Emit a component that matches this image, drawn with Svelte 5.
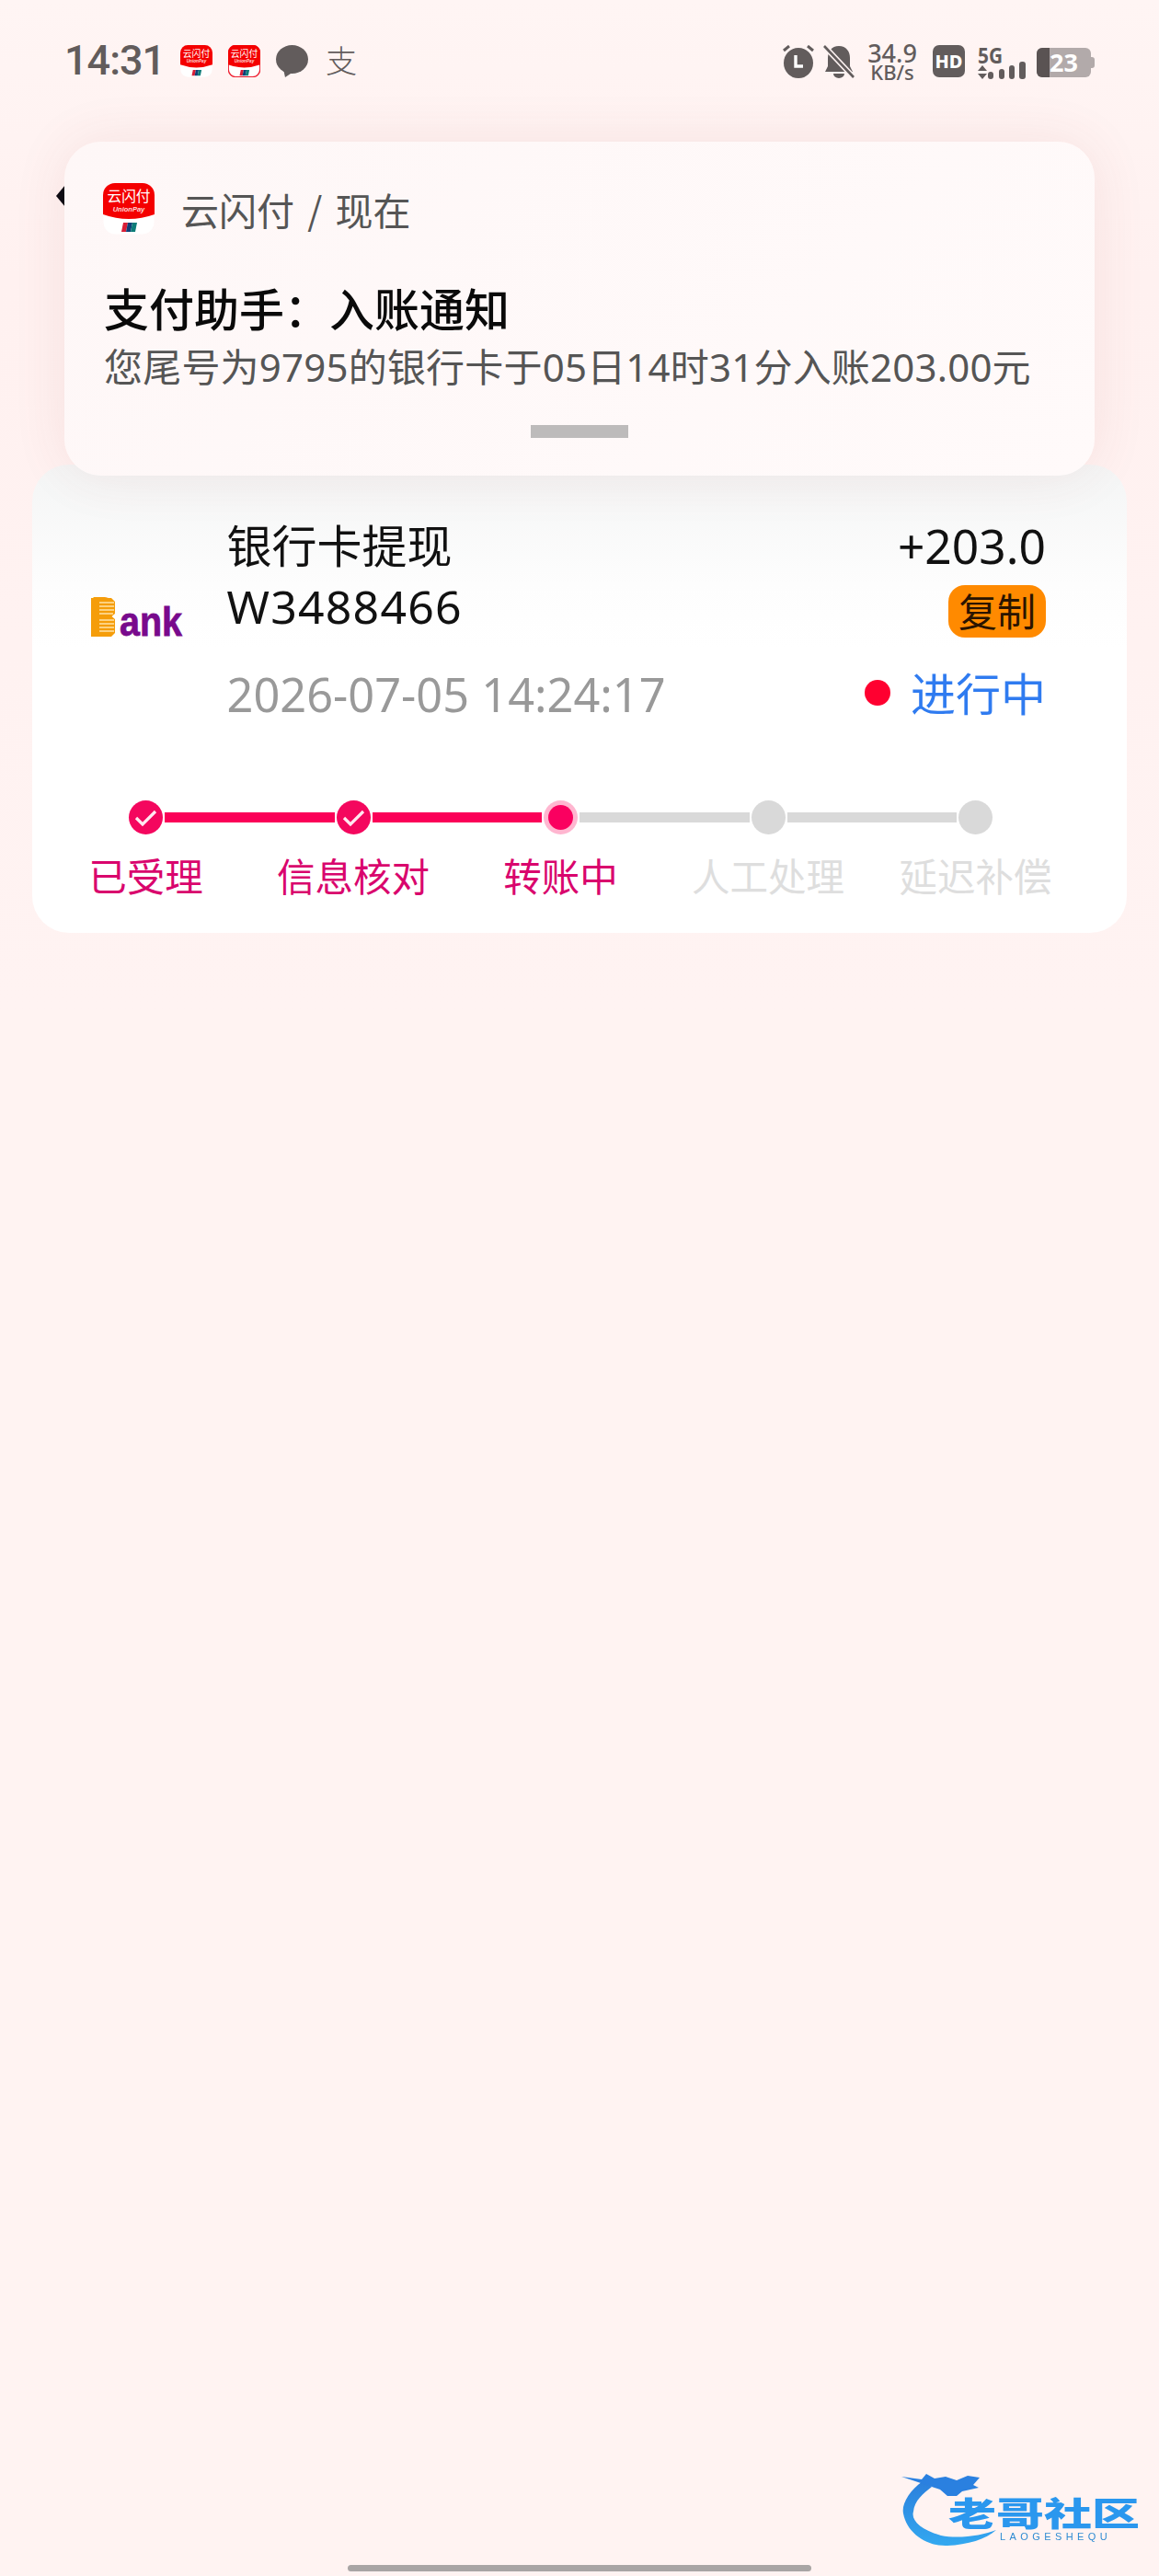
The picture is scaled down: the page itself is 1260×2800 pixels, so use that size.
<script>
  const steps = [
    { label: '已受理', state: 'done' },
    { label: '信息核对', state: 'done' },
    { label: '转账中', state: 'current' },
    { label: '人工处理', state: 'todo' },
    { label: '延迟补偿', state: 'todo' }
  ];
</script>

{#snippet appIcon(size, outlined)}
  <svg class="app-icon" width={size} height={size} viewBox="0 0 56 56" aria-hidden="true">
    <rect x="0.5" y="0.5" width="55" height="55" rx="13" fill="#fff" stroke={outlined ? '#ee2233' : 'none'} stroke-width={outlined ? 2 : 0} />
    <path d="M0 13A13 13 0 0 1 13 0H43A13 13 0 0 1 56 13V34Q28 44 0 34Z" fill="#f40000" />
    <text x="28" y="20" class="yun" text-anchor="middle" textLength="47" lengthAdjust="spacingAndGlyphs">云闪付</text>
    <text x="28" y="31" class="up" text-anchor="middle">UnionPay</text>
    <path d="M22 43H27L25 53H20Z" fill="#d81e36" />
    <path d="M27 43H32L30 53H25Z" fill="#0f3f76" />
    <path d="M32 43H37L35 53H30Z" fill="#0d7c78" />
  </svg>
{/snippet}

<div class="page">
  <header class="status">
    <div class="status-left">
      <span class="time">14:31</span>
      {@render appIcon(35, false)}
      {@render appIcon(35, true)}
      <svg class="chat" width="35" height="35" viewBox="0 0 35 35" aria-hidden="true">
        <ellipse cx="17.5" cy="15.5" rx="17.5" ry="15.5" fill="#625c5c" />
        <path d="M8 26L10 35L19 29Z" fill="#625c5c" />
      </svg>
      <span class="ali">支</span>
    </div>
    <div class="status-right">
      <svg width="36" height="36" viewBox="0 0 36 36" aria-hidden="true">
        <ellipse cx="18" cy="19.5" rx="16" ry="16.5" fill="#625c5c" />
        <path d="M2 6L8 1M34 6L28 1" stroke="#625c5c" stroke-width="3" />
        <path d="M15 11V23H23" fill="none" stroke="#fff" stroke-width="3.4" />
      </svg>
      <svg width="34" height="36" viewBox="0 0 34 36" aria-hidden="true">
        <path d="M17 1C25 1 29 7 29 14V23L32 29H2L5 23V14C5 7 9 1 17 1Z" fill="#625c5c" />
        <path d="M11 31A6 5 0 0 0 23 31Z" fill="#625c5c" />
        <path d="M1 1L33 35" stroke="#fdf2f1" stroke-width="6" />
        <path d="M1 1L33 35" stroke="#625c5c" stroke-width="2.6" />
      </svg>
      <div class="speed"><span class="s1">34.9</span><span class="s2">KB/s</span></div>
      <span class="hd">HD</span>
      <svg width="52" height="38" viewBox="0 0 52 38" aria-hidden="true">
        <text x="0" y="20" class="fiveg" textLength="27" lengthAdjust="spacingAndGlyphs">5G</text>
        <path d="M5 22L10 28H0ZM0 31H10L5 37Z" fill="#625c5c" />
        <rect x="11" y="29" width="6" height="8" rx="3" fill="#625c5c" />
        <rect x="23" y="26" width="6" height="11" rx="3" fill="#625c5c" />
        <rect x="34" y="22" width="6" height="15" rx="3" fill="#625c5c" />
        <rect x="45" y="18" width="7" height="19" rx="3" fill="#625c5c" />
      </svg>
      <div class="battery"><span class="charge"></span><span class="level">23</span><span class="nub"></span></div>
    </div>
  </header>

  <div class="top-bar">
    <svg class="back" width="12" height="26" viewBox="0 0 12 26" aria-hidden="true"><path d="M11 1L1 13L11 25Z" fill="#0a0a12" /></svg>
  </div>

  <section class="card">
    <div class="summary">
      <div class="logo">
        <svg width="104" height="44" viewBox="0 0 104 44" aria-hidden="true">
          <path d="M3 1H25L29 5V18L25.5 21L29 24V39L25 43H3Z" fill="#f59d0a" />
          <text x="4" y="42" class="logo-b" textLength="25" lengthAdjust="spacingAndGlyphs">B</text>
          <path d="M12 6H28M12 10H28M12 14H28M12 18H27M12 25H28M12 29H28M12 33H28M12 37H28" stroke="#ffe2a6" stroke-width="1.3" />
          <text x="34" y="42" class="logo-ank" textLength="68" lengthAdjust="spacingAndGlyphs">ank</text>
        </svg>
      </div>
      <div class="info">
        <div class="line-top">
          <span class="name">银行卡提现</span>
          <span class="amount">+203.0</span>
        </div>
        <div class="line-mid">
          <span class="order">W3488466</span>
          <span class="copy">复制</span>
        </div>
        <div class="line-bot">
          <span class="date">2026-07-05 14:24:17</span>
          <span class="state"><i class="dot-red"></i><span class="state-text">进行中</span></span>
        </div>
      </div>
    </div>

    <div class="track">
      {#each steps as s, i}
        <span class="node {s.state}">
          {#if s.state === 'done'}
            <svg width="25" height="20" viewBox="0 0 25 20" aria-hidden="true"><path d="M2 10L9 17L23 3" fill="none" stroke="#ffe9f0" stroke-width="3.2" /></svg>
          {:else if s.state === 'current'}
            <i class="inner"></i>
          {/if}
        </span>
        {#if i < steps.length - 1}
          <span class="bar" class:on={i < 2}></span>
        {/if}
      {/each}
    </div>
    <div class="labels">
      {#each steps as s}
        <span class="label" class:off={s.state === 'todo'}>{s.label}</span>
      {/each}
    </div>
  </section>

  <div class="home"></div>

  <aside class="notice">
    <div class="notice-app">
      {@render appIcon(56, false)}
      <span class="app-name">云闪付 / 现在</span>
    </div>
    <div class="notice-title">支付助手：入账通知</div>
    <div class="notice-body">您尾号为9795的银行卡于05日14时31分入账203.00元</div>
    <div class="grip"></div>
  </aside>

  <div class="mark">
    <svg class="dragon" width="110" height="90" viewBox="0 0 110 90" aria-hidden="true">
      <defs>
        <linearGradient id="dg" x1="0" y1="0" x2="0" y2="1">
          <stop offset="0" stop-color="#2b7fdc" />
          <stop offset="1" stop-color="#33a8f0" />
        </linearGradient>
      </defs>
      <path d="M23 11C8 22 0 36 2 46C6 68 28 82 50 81C72 80 92 74 103 64C88 70 62 74 43 70C22 64 10 54 13 44C14 32 24 24 33 17Z" fill="url(#dg)" />
      <path d="M0 6L22 9L27 3L36 8L48 6L60 10L72 5L85 7L78 15L84 18L66 22L60 27L50 27L42 20L30 16L18 12Z" fill="#2a80e0" />
    </svg>
    <span class="mark-cn">老哥社区</span>
    <span class="mark-en">LAOGESHEQU</span>
  </div>
</div>

<style>
  :global(body) {
    margin: 0;
    background: #fff3f2;
  }
  .page {
    position: relative;
    width: 1260px;
    height: 2800px;
    display: flex;
    flex-direction: column;
    overflow: hidden;
    box-sizing: border-box;
    background: linear-gradient(180deg, #fff5f4 0, #fff1f0 300px, #fff3f2 1100px);
    font-family: "Noto Sans", "Noto Sans CJK SC", sans-serif;
  }

  .status {
    height: 134px;
    padding: 49px 70px 0 70px;
    box-sizing: border-box;
    display: flex;
    justify-content: space-between;
    align-items: flex-start;
    color: #625c5c;
  }
  .status-left, .status-right {
    display: flex;
    align-items: flex-start;
  }
  .time {
    font-size: 45px;
    line-height: 34px;
    font-weight: 500;
    width: 126px;
    letter-spacing: -1px;
    font-family: Roboto, sans-serif;
  }
  .status-left :global(.app-icon) {
    margin-right: 17px;
  }
  .chat { margin-right: 19px; }
  .ali {
    font-size: 34px;
    line-height: 36px;
    font-weight: 300;
    margin-top: -2px;
    font-family: "Noto Sans CJK SC", sans-serif;
  }
  .status-right > svg { flex: none; }
  .status-right > svg:nth-child(2) { margin-left: 9px; }
  .speed {
    width: 54px;
    margin: -3px 17px 0 14px;
    display: flex;
    flex-direction: column;
    align-items: center;
    font-weight: 500;
  }
  .s1 { font-size: 27px; line-height: 23px; }
  .s2 { font-size: 22px; line-height: 19px; }
  .hd {
    width: 35px;
    height: 35px;
    border-radius: 7px;
    background: #625c5c;
    color: #fff;
    font-size: 20px;
    font-weight: 800;
    line-height: 35px;
    text-align: center;
    margin-right: 14px;
  }
  .fiveg {
    font-size: 24px;
    font-weight: 700;
    fill: #625c5c;
  }
  .battery {
    position: relative;
    width: 59px;
    height: 32px;
    margin: 3px 4px 0 12px;
    background: #b2aaaa;
    border-radius: 6px;
  }
  .charge {
    position: absolute;
    left: 0;
    top: 0;
    bottom: 0;
    width: 14px;
    background: #5a5353;
    border-radius: 6px 0 0 6px;
  }
  .level {
    position: absolute;
    left: 14px;
    top: 0;
    font-size: 27px;
    line-height: 32px;
    font-weight: 700;
    color: #fff;
  }
  .nub {
    position: absolute;
    right: -4px;
    top: 10px;
    width: 4px;
    height: 12px;
    border-radius: 0 3px 3px 0;
    background: #b2aaaa;
  }

  .top-bar {
    height: 371px;
    padding: 66px 0 0 60px;
    box-sizing: border-box;
  }
  .back { display: block; }

  .card {
    margin: 0 35px;
    height: 509px;
    box-sizing: border-box;
    border-radius: 40px;
    background: linear-gradient(180deg, #f4f5f5 0, #fdfdfd 130px, #fff 200px);
  }
  .summary {
    display: flex;
    padding-top: 55px;
  }
  .logo {
    width: 211.5px;
    padding: 89px 0 0 61px;
    box-sizing: border-box;
    flex: none;
  }
  .logo svg { display: block; overflow: visible; }
  .info { width: 890.5px; }
  .line-top, .line-mid, .line-bot {
    display: flex;
    justify-content: space-between;
    align-items: center;
  }
  .line-top { height: 60px; }
  .line-mid { height: 62px; margin-top: 13px; }
  .line-bot { height: 60px; margin-top: 29px; }
  .name {
    font-size: 49px;
    color: #111;
    font-family: "Noto Sans CJK SC", sans-serif;
  }
  .amount {
    font-size: 51.5px;
    color: #111;
    margin-top: 6px;
  }
  .order {
    font-size: 50px;
    color: #111;
    letter-spacing: 1.2px;
    margin-bottom: 10px;
  }
  .copy {
    width: 106px;
    height: 57px;
    border-radius: 18px;
    background: #ff8a00;
    color: #2a1400;
    font-size: 42px;
    line-height: 54px;
    text-align: center;
    font-family: "Noto Sans CJK SC", sans-serif;
  }
  .date {
    font-size: 50.5px;
    color: #999;
  }
  .state {
    display: flex;
    align-items: center;
    margin-bottom: 6px;
  }
  .dot-red {
    width: 28px;
    height: 28px;
    border-radius: 50%;
    background: #ff0030;
    margin: 3px 22px 0 0;
  }
  .state-text {
    font-size: 49px;
    color: #2f7bf0;
    font-family: "Noto Sans CJK SC", sans-serif;
  }

  .track {
    display: flex;
    align-items: center;
    gap: 2px;
    margin-top: 86px;
    padding: 0 146px 0 105px;
  }
  .node {
    width: 37px;
    height: 37px;
    flex: none;
    border-radius: 50%;
    display: flex;
    align-items: center;
    justify-content: center;
    box-sizing: border-box;
  }
  .node.done { background: #f4075e; }
  .node.current { background: #ffb6d0; }
  .node.todo { background: #d9d9d9; }
  .inner {
    width: 27px;
    height: 27px;
    border-radius: 50%;
    background: #fa0060;
  }
  .bar {
    flex: 1;
    height: 11px;
    background: #d9d9d9;
  }
  .bar.on { background: #fb0058; }

  .labels {
    display: grid;
    grid-template-columns: repeat(5, 225.5px);
    padding-left: 10.75px;
    margin-top: 15px;
  }
  .label {
    text-align: center;
    font-size: 41.5px;
    line-height: 58px;
    color: #d9056d;
    font-family: "Noto Sans CJK SC", sans-serif;
  }
  .label.off { color: #dedede; }

  .home {
    width: 504px;
    height: 7px;
    border-radius: 4px;
    background: #a9a5a5;
    margin: auto auto 5px;
  }

  .notice {
    position: absolute;
    left: 70px;
    top: 154px;
    width: 1120px;
    height: 363px;
    box-sizing: border-box;
    padding: 45px 44px 0 42px;
    border-radius: 40px;
    background: linear-gradient(135deg, #fef7f7, #fffafa);
    box-shadow: 0 0 60px rgba(160, 60, 50, 0.09);
  }
  .notice-app {
    display: flex;
    align-items: center;
    height: 56px;
  }
  .app-name {
    margin-left: 29px;
    font-size: 41px;
    word-spacing: 5px;
    color: #555;
    font-family: "Noto Sans CJK SC", sans-serif;
  }
  .notice-title {
    margin: 48px 0 0 1px;
    font-size: 49px;
    line-height: 62px;
    font-weight: 500;
    color: #0a0a0a;
    font-family: "Noto Sans CJK SC", sans-serif;
  }
  .notice-body {
    margin: 7px 0 0 1px;
    font-size: 42px;
    line-height: 54px;
    letter-spacing: 0.2px;
    color: #555;
    white-space: nowrap;
  }
  .grip {
    width: 106px;
    height: 14px;
    margin: 36px auto 0;
    background: #bdbbbb;
    position: relative;
    left: 1px;
  }

  .mark {
    position: absolute;
    left: 980px;
    top: 2686px;
    width: 270px;
    height: 90px;
    filter: blur(0.7px);
  }
  .dragon { position: absolute; left: 0; top: 0; }
  .mark-cn {
    position: absolute;
    left: 51px;
    top: 15px;
    font-size: 52px;
    line-height: 60px;
    font-weight: 900;
    color: #2a97ee;
    white-space: nowrap;
    transform: scaleY(0.7);
    font-family: "Noto Sans CJK SC", sans-serif;
  }
  .mark-en {
    position: absolute;
    left: 107px;
    top: 65px;
    font-size: 11px;
    line-height: 12px;
    letter-spacing: 4.4px;
    color: #2f8bd2;
    font-family: "Liberation Sans", sans-serif;
    white-space: nowrap;
  }

  .yun {
    font-size: 16px;
    fill: #fff;
    font-family: "Noto Sans CJK SC", sans-serif;
  }
  .up {
    font-size: 7.5px;
    font-style: italic;
    font-weight: 700;
    fill: #ffd9d9;
    font-family: "Liberation Sans", sans-serif;
  }
  .logo-b {
    font-size: 59px;
    font-weight: 900;
    fill: #f59d0a;
    stroke: #f59d0a;
    stroke-width: 2px;
    font-family: "Liberation Sans", sans-serif;
  }
  .logo-ank {
    font-size: 45px;
    font-weight: 700;
    fill: #780a8c;
    stroke: #780a8c;
    stroke-width: 0.8px;
    font-family: "Liberation Sans", sans-serif;
  }
</style>
